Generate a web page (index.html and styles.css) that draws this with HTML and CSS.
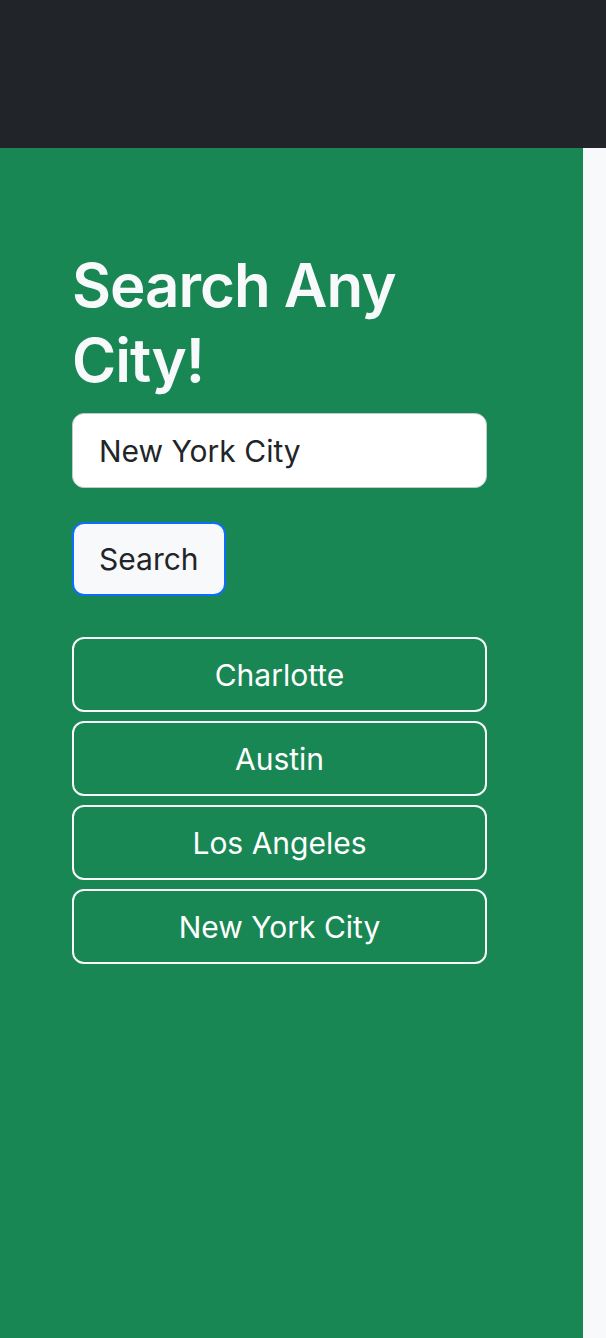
FILE: index.html
```html
<!DOCTYPE html>
<html lang="en">
<head>
<meta charset="utf-8">
<title>Weather Dashboard</title>
<link rel="stylesheet" href="styles.css">
</head>
<body>
<header class="topbar"></header>
<main class="layout">
  <aside class="sidebar">
    <h1 class="title">Search Any City!</h1>
    <input class="city-input" type="text" value="New York City">
    <button class="search-btn" type="button">Search</button>
    <div class="history">
      <button class="city-btn" type="button">Charlotte</button>
      <button class="city-btn" type="button">Austin</button>
      <button class="city-btn" type="button">Los Angeles</button>
      <button class="city-btn" type="button">New York City</button>
    </div>
  </aside>
  <section class="content"></section>
</main>
</body>
</html>
```
FILE: styles.css
```css
* { box-sizing: border-box; }
html, body { margin: 0; padding: 0; height: 100%; }
body {
  font-family: Inter, "Noto Sans", "Liberation Sans", sans-serif;
  background: #f8f9fa;
  color: #212529;
  display: flex;
  flex-direction: column;
}
.topbar {
  height: 148px;
  background: #212529;
  flex: none;
}
.layout {
  flex: 1;
  display: flex;
}
.sidebar {
  width: 583px;
  background: #198754;
  padding: 100px 96px 0 72px;
}
.content { flex: 1; background: #f8f9fa; }
.title {
  margin: 0 0 15px;
  font-size: 60px;
  line-height: 75px;
  font-weight: 600;
  color: #f8f9fa;
  letter-spacing: -1px;
}
.city-input {
  display: block;
  width: 415px;
  height: 75px;
  padding: 0 26px;
  font-family: inherit;
  font-size: 30px;
  color: #212529;
  background: #fff;
  border: 1.5px solid #c4c9ce;
  border-radius: 12px;
  outline: none;
}
.search-btn {
  display: block;
  margin-top: 34px;
  height: 74px;
  padding: 0 25px;
  font-family: inherit;
  font-size: 30px;
  color: #212529;
  background: #f8f9fa;
  border: 2px solid #0d6efd;
  border-radius: 12px;
}
.history {
  margin-top: 41px;
  width: 415px;
  display: flex;
  flex-direction: column;
  gap: 9px;
}
.city-btn {
  height: 75px;
  font-family: inherit;
  font-size: 30px;
  color: #fff;
  background: transparent;
  border: 2px solid #f8f9fa;
  border-radius: 12px;
}
```
